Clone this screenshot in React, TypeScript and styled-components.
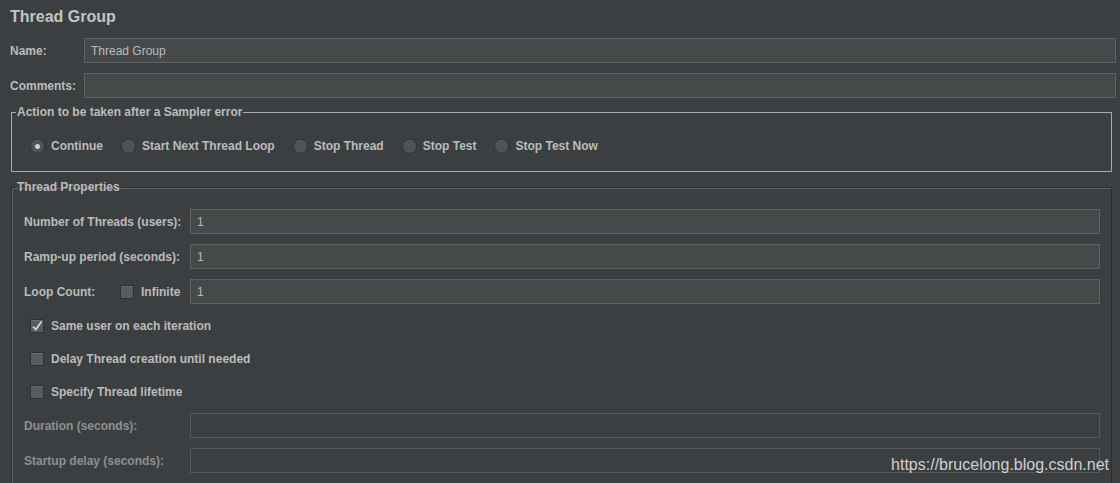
import styled, { createGlobalStyle } from "styled-components";

const GlobalStyle = createGlobalStyle`
    html, body {
        margin: 0;
        padding: 0;
        background: #3c3f41;
    }
    body {
        font-family: "Liberation Sans", Arial, sans-serif;
        font-size: 12px;
        color: #bbbbbb;
    }
`;

const Page = styled.div`
    position: relative;
    width: 1120px;
    height: 483px;
    overflow: hidden;
    background: #3c3f41;
    padding: 8px 4px 0 10px;
    box-sizing: border-box;
`;

const Title = styled.h1`
    margin: 0 0 12px 0;
    font-size: 16px;
    line-height: 18px;
    font-weight: bold;
    color: #c4c4c4;
`;

const Row = styled.div<{ $h?: number }>`
    display: flex;
    align-items: center;
    height: ${(p) => p.$h ?? 25}px;
`;

const TopRows = styled.div`
    display: flex;
    flex-direction: column;
    gap: 10px;
`;

const Label = styled.span<{ $w: number; $dim?: boolean }>`
    flex: none;
    width: ${(p) => p.$w}px;
    font-weight: bold;
    color: ${(p) => (p.$dim ? "#8e8f90" : "#bbbbbb")};
    white-space: nowrap;
`;

const Input = styled.div<{ $off?: boolean }>`
    flex: 1;
    height: 25px;
    box-sizing: border-box;
    border: 1px solid ${(p) => (p.$off ? "#55585a" : "#5d6163")};
    background: ${(p) => (p.$off ? "#3c3f41" : "#45494a")};
    padding: 0 6px;
    display: flex;
    align-items: center;
    color: #bbbbbb;
`;

const Box = styled.fieldset<{ $dark?: boolean }>`
    margin: 0 4px 0 1px;
    padding: 0 4px;
    border: 1px solid ${(p) => (p.$dark ? "#2b2d2f" : "#a9a9a9")};
    box-shadow: ${(p) => (p.$dark ? "inset 1px 1px 0 #606366" : "none")};
    min-inline-size: 0;
`;

const Legend = styled.legend`
    padding: 0 1px;
    margin-left: 0;
    font-weight: bold;
    line-height: 14px;
    color: #bbbbbb;
`;

const ActionBox = styled(Box)`
    margin-top: 7px;
`;

const PropsBox = styled(Box)`
    margin-top: 8px;
`;

const ActionBody = styled.div`
    padding: 19px 0 17px 14px;
`;

const PropsBody = styled.div`
    padding: 15px 7px 20px 8px;
`;

const RadioRow = styled.div`
    display: flex;
    align-items: center;
    gap: 18px;
    height: 16px;
`;

const Option = styled.label`
    display: flex;
    align-items: center;
    gap: 6px;
    font-weight: bold;
    white-space: nowrap;
`;

const Radio = styled.span<{ $on?: boolean }>`
    width: 15px;
    height: 15px;
    box-sizing: border-box;
    border-radius: 50%;
    background: #505355;
    border: 1px solid #2f3133;
    box-shadow: inset 0 1px 0 #626567;
    display: flex;
    align-items: center;
    justify-content: center;
    &::after {
        content: "";
        width: 5px;
        height: 5px;
        border-radius: 50%;
        background: ${(p) => (p.$on ? "#cfcfcf" : "transparent")};
    }
`;

const Check = styled.span`
    flex: none;
    width: 14px;
    height: 14px;
    box-sizing: border-box;
    background: #595c5e;
    border: 1px solid #2e3032;
    box-shadow: inset 0 1px 0 #6a6d6f;
    display: flex;
    align-items: center;
    justify-content: center;
`;

const PropRows = styled.div`
    display: flex;
    flex-direction: column;
    gap: 10px;
`;

const CheckRow = styled(Row)`
    padding-left: 6px;
    gap: 7px;
    font-weight: bold;
`;

const LoopBox = styled.label`
    flex: none;
    display: flex;
    align-items: center;
    gap: 7px;
    width: 70px;
    font-weight: bold;
`;

const Watermark = styled.div`
    position: absolute;
    right: 11px;
    bottom: 9px;
    font-family: "Liberation Sans", Arial, sans-serif;
    font-size: 16px;
    color: rgba(235, 235, 235, 0.85);
`;

const Tick = () => (
    <svg width="12" height="12" viewBox="0 0 12 12">
        <path d="M2 6.5 L4.8 9.5 L10.5 1.5" fill="none" stroke="#d4d4d4" strokeWidth="1.8" />
    </svg>
);

const actions = ["Continue", "Start Next Thread Loop", "Stop Thread", "Stop Test", "Stop Test Now"];

export default function App() {
    return (
        <Page>
            <GlobalStyle />
            <Title>Thread Group</Title>
            <TopRows>
                <Row>
                    <Label $w={74}>Name:</Label>
                    <Input>Thread Group</Input>
                </Row>
                <Row>
                    <Label $w={74}>Comments:</Label>
                    <Input />
                </Row>
            </TopRows>
            <ActionBox>
                <Legend>Action to be taken after a Sampler error</Legend>
                <ActionBody>
                    <RadioRow>
                        {actions.map((a, i) => (
                            <Option key={a}>
                                <Radio $on={i === 0} />
                                {a}
                            </Option>
                        ))}
                    </RadioRow>
                </ActionBody>
            </ActionBox>
            <PropsBox $dark>
                <Legend>Thread Properties</Legend>
                <PropsBody>
                    <PropRows>
                        <Row>
                            <Label $w={166}>Number of Threads (users):</Label>
                            <Input>1</Input>
                        </Row>
                        <Row>
                            <Label $w={166}>Ramp-up period (seconds):</Label>
                            <Input>1</Input>
                        </Row>
                        <Row>
                            <Label $w={96}>Loop Count:</Label>
                            <LoopBox>
                                <Check />
                                Infinite
                            </LoopBox>
                            <Input>1</Input>
                        </Row>
                        <CheckRow $h={23}>
                            <Check><Tick /></Check>
                            Same user on each iteration
                        </CheckRow>
                        <CheckRow $h={23}>
                            <Check />
                            Delay Thread creation until needed
                        </CheckRow>
                        <CheckRow $h={23}>
                            <Check />
                            Specify Thread lifetime
                        </CheckRow>
                        <Row>
                            <Label $w={166} $dim>Duration (seconds):</Label>
                            <Input $off />
                        </Row>
                        <Row>
                            <Label $w={166} $dim>Startup delay (seconds):</Label>
                            <Input $off />
                        </Row>
                    </PropRows>
                </PropsBody>
            </PropsBox>
            <Watermark>https://brucelong.blog.csdn.net</Watermark>
        </Page>
    );
}
